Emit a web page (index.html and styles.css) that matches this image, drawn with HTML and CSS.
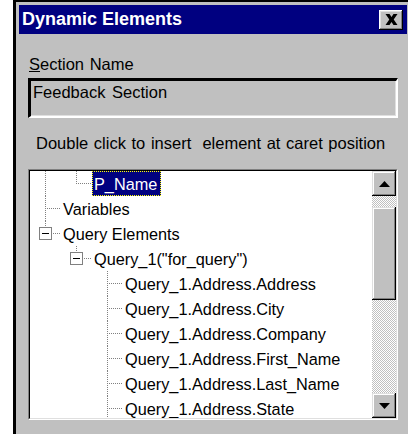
FILE: index.html
```html
<!DOCTYPE html>
<html lang="en">
<head>
<meta charset="utf-8">
<title>Dynamic Elements</title>
<link rel="stylesheet" href="styles.css">
</head>
<body>
<div class="window">
  <div class="titlebar">
    <span class="title">Dynamic Elements</span>
    <button class="close" type="button" aria-label="Close">
      <svg width="13" height="11" viewBox="0 0 13 11" aria-hidden="true">
        <path d="M0.5 0h4l2 3 2-3h4L8.7 5.5 12.5 11h-4l-2-3-2 3h-4l3.8-5.5z" fill="#000"/>
      </svg>
    </button>
  </div>

  <div class="content">
    <div class="field-label"><u>S</u>ection Name</div>
    <div class="textbox">Feedback Section</div>
    <p class="hint">Double click to insert&nbsp; element at caret position</p>

    <div class="listbox">
      <div class="listbox-inner">
        <ul class="tree">
          <li class="row"><span class="g v"></span><span class="c last"></span><span class="label selected">P_Name</span></li>
          <li class="row"><span class="c"></span><span class="label">Variables</span></li>
          <li class="row"><span class="c last"><span class="box"></span></span><span class="label">Query Elements</span></li>
          <li class="row"><span class="g"></span><span class="c last"><span class="box"></span></span><span class="label">Query_1("for_query")</span></li>
          <li class="row"><span class="g"></span><span class="g"></span><span class="c"></span><span class="label">Query_1.Address.Address</span></li>
          <li class="row"><span class="g"></span><span class="g"></span><span class="c"></span><span class="label">Query_1.Address.City</span></li>
          <li class="row"><span class="g"></span><span class="g"></span><span class="c"></span><span class="label">Query_1.Address.Company</span></li>
          <li class="row"><span class="g"></span><span class="g"></span><span class="c"></span><span class="label">Query_1.Address.First_Name</span></li>
          <li class="row"><span class="g"></span><span class="g"></span><span class="c"></span><span class="label">Query_1.Address.Last_Name</span></li>
          <li class="row"><span class="g"></span><span class="g"></span><span class="c"></span><span class="label">Query_1.Address.State</span></li>
        </ul>

        <div class="scrollbar">
          <div class="sb-btn">
            <svg width="11" height="6" viewBox="0 0 11 6" aria-hidden="true"><path d="M5.5 0L11 6H0z" fill="#000"/></svg>
          </div>
          <div class="sb-track"><div class="sb-thumb"></div></div>
          <div class="sb-btn">
            <svg width="11" height="6" viewBox="0 0 11 6" aria-hidden="true"><path d="M0 0h11L5.5 6z" fill="#000"/></svg>
          </div>
        </div>
      </div>
    </div>
  </div>
</div>
</body>
</html>
```

FILE: styles.css
```css
html, body {
  margin: 0;
  height: 100%;
  overflow: hidden;
  background: #fff;
}

body {
  font-family: "Liberation Sans", Arial, sans-serif;
  font-size: 16.5px;
  color: #000;
}

/* Dialog frame */
.window {
  margin-left: 13px;
  width: 397px;
  height: 440px;
  box-sizing: border-box;
  border-top: 2px solid #000;
  border-left: 3px solid #000;
  padding: 3px 3px 0;
  background: #c0c0c0;
}

.titlebar {
  display: flex;
  align-items: center;
  justify-content: space-between;
  height: 29px;
  padding: 0 4px 0 3px;
  background: #000080;
}

.title {
  color: #fff;
  font-weight: bold;
  font-size: 18px;
  line-height: 29px;
  white-space: nowrap;
}

.close {
  display: flex;
  align-items: center;
  justify-content: center;
  width: 24px;
  height: 20px;
  padding: 0 0 0 1px;
  border: 0;
  background: #c0c0c0;
  box-shadow: inset -1px -1px #000, inset 1px 1px #fff,
              inset -2px -2px #808080, inset 2px 2px #dfdfdf;
}

/* Dialog body */
.content {
  padding: 21px 9px 0;
}

.field-label {
  line-height: 19px;
  padding-left: 1px;
  word-spacing: 1px;
}

.textbox {
  margin-top: 4px;
  height: 40px;
  box-sizing: border-box;
  padding: 2px 3px 2px 2px;
  line-height: 19px;
  word-spacing: 2px;
  border-style: solid;
  border-width: 3px 2px 2px 3px;
  border-color: #000 #fff #fff #000;
  box-shadow: inset -1px -1px #dfdfdf;
  background: #c0c0c0;
}

.hint {
  margin: 16px 0 0;
  padding-left: 8px;
  line-height: 19px;
  word-spacing: 1px;
  white-space: nowrap;
}

/* Sunken tree list */
.listbox {
  margin-top: 16px;
  height: 251px;
  box-sizing: border-box;
  border: 1px solid;
  border-color: #808080 #fff #fff #808080;
}

.listbox-inner {
  display: flex;
  height: 100%;
  box-sizing: border-box;
  border: 1px solid;
  border-color: #000 #dfdfdf #dfdfdf #000;
  background: #fff;
}

.tree {
  flex: 1;
  margin: 0;
  padding: 0;
  list-style: none;
  overflow: hidden;
  font-size: 16.3px;
}

.row {
  display: flex;
  height: 25px;
}

/* Tree guide columns and connectors */
.g,
.c {
  flex: none;
  width: 31px;
  display: flex;
  align-items: center;
}

.g.v {
  background: repeating-linear-gradient(to bottom, #808080 0 1px, transparent 1px 2px) 15px 0 / 1px 100% no-repeat;
}

.c {
  background:
    repeating-linear-gradient(to right, #808080 0 1px, transparent 1px 2px) 15px 12px / 16px 1px no-repeat,
    repeating-linear-gradient(to bottom, #808080 0 1px, transparent 1px 2px) 15px 0 / 1px 100% no-repeat;
}

.c.last {
  background:
    repeating-linear-gradient(to right, #808080 0 1px, transparent 1px 2px) 15px 12px / 16px 1px no-repeat,
    repeating-linear-gradient(to bottom, #808080 0 1px, transparent 1px 2px) 15px 0 / 1px 13px no-repeat;
}

.box {
  width: 13px;
  height: 13px;
  box-sizing: border-box;
  margin: 0 0 0 9px;
  border: 1px solid #808080;
  background: linear-gradient(#000, #000) center / 7px 1px no-repeat, #fff;
}

.label {
  padding: 0 2px;
  line-height: 26px;
  white-space: nowrap;
}

.label.selected {
  padding: 0 4px 0 2px;
  background: #000080;
  color: #fff;
  outline: 1px dotted #ffff00;
  outline-offset: -1px;
}

/* Vertical scrollbar */
.scrollbar {
  flex: none;
  width: 24px;
  display: flex;
  flex-direction: column;
}

.sb-btn,
.sb-thumb {
  background: #c0c0c0;
  box-shadow: inset -1px -1px #000, inset 1px 1px #dfdfdf,
              inset -2px -2px #808080, inset 2px 2px #fff;
}

.sb-btn {
  flex: none;
  height: 25px;
  display: flex;
  align-items: center;
  justify-content: center;
}

.sb-track {
  flex: 1;
  padding-top: 11px;
  background: repeating-conic-gradient(#fff 0 25%, #c0c0c0 0 50%) 0 0 / 2px 2px;
}

.sb-thumb {
  height: 93px;
}
```
